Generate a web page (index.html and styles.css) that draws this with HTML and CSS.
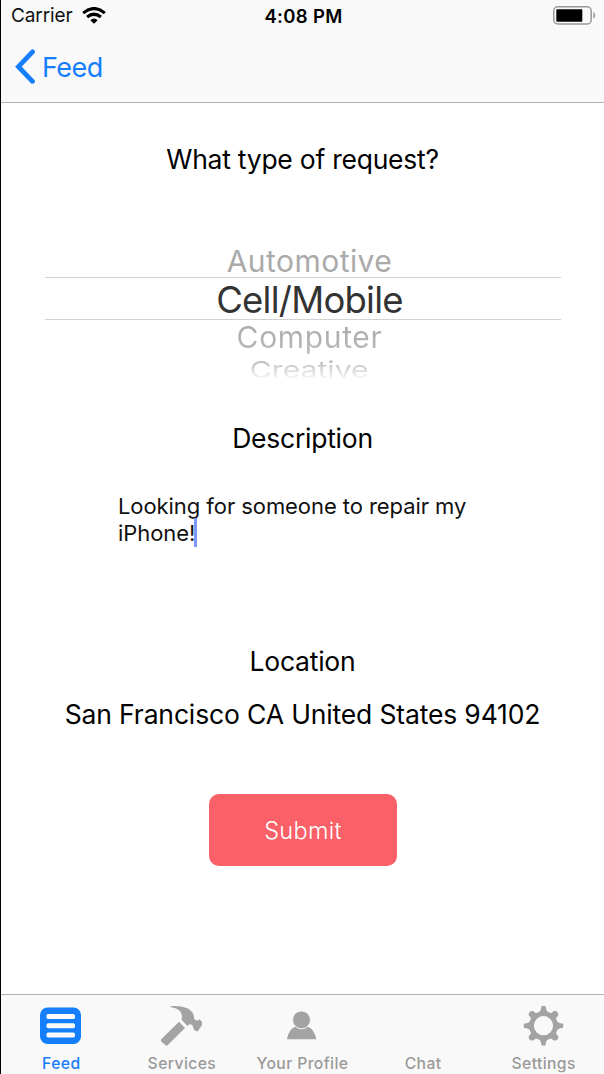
FILE: index.html
```html
<!DOCTYPE html>
<html lang="en">
<head>
<meta charset="utf-8">
<title>New request</title>
<link rel="stylesheet" href="styles.css">
</head>
<body>
<div class="screen">
  <header class="top">
    <div class="status">
      <div class="carrier"><span class="carrier-name">Carrier</span>
        <svg class="wifi" width="24" height="17" viewBox="0 0 24 17"><g fill="none" stroke="#000" stroke-width="3.200"><path d="M1.2 6.1Q12-3 22.8 6.1"/><path d="M5.1 10.1Q12 4.400 18.900 10.100"/></g><path d="M8.300 13.200Q12 9.800 15.700 13.200L12 16.700Z"/></svg>
      </div>
      <span class="time">4:08 PM</span>
      <svg class="battery" width="43" height="20" viewBox="0 0 43 20"><rect x=".8" y=".8" width="37.400" height="17.200" rx="4" fill="none" stroke="#999" stroke-width="1.500"/><rect x="3.300" y="3.200" width="26" height="12.500" rx=".8"/><path d="M40.800 6.500Q42.800 9.400 40.800 12.300Z" fill="#888" stroke="#888" stroke-width=".5"/></svg>
    </div>
    <nav class="back">
      <svg width="22" height="36" viewBox="0 0 22 36"><path d="M19.500 2.800L5.400 17.700L19.500 32.300" fill="none" stroke="#157efb" stroke-width="4.800" stroke-linecap="round" stroke-linejoin="miter"/></svg>
      <span class="back-label">Feed</span>
    </nav>
  </header>
  <main class="form">
    <h1 class="label question">What type of request?</h1>
    <div class="picker">
      <div class="option near auto"><span>Automotive</span></div>
      <div class="option selected"><span>Cell/Mobile</span></div>
      <div class="option near comp"><span>Computer</span></div>
      <div class="option far"><span>Creative</span></div>
    </div>
    <h2 class="label description">Description</h2>
    <p class="message">Looking for someone to repair my<br>iPhone!<i class="caret"></i></p>
    <h2 class="label location">Location</h2>
    <p class="label address">San Francisco CA United States 94102</p>
    <button class="submit">Submit</button>
  </main>
  <footer class="tabs">
    <div class="tab active">
      <svg class="icon" width="42" height="42" viewBox="0 0 42 42"><rect x="0" y="2.500" width="41" height="36.500" rx="7.500" fill="#157efb"/><g fill="#f9f9f9"><rect x="6.500" y="9" width="28.500" height="5" rx="1.700"/><rect x="6.500" y="18.200" width="28.500" height="5" rx="1.700"/><rect x="6.500" y="27.500" width="28.500" height="5" rx="1.700"/></g></svg>
      <span>Feed</span>
    </div>
    <div class="tab">
      <svg class="icon" width="42" height="42" viewBox="0 0 42 42"><g fill="#a3a3a3"><path d="M9.500 1.300Q19 .5 26.500 3.300Q33.500 7.500 33 13.300Q33.800 15.900 36.800 15.400L38.500 14.300L41 17V20.300L36.500 26.400L33.300 25.200L31.500 20.500Q29 18 26.300 20.900L20.400 14.600Q22 10.300 19.300 6.500Q15.800 3.100 9.500 2.100Z"/><path d="M18 16.800L24 23L5.800 41L0 36.600V34.500Z"/></g></svg>
      <span>Services</span>
    </div>
    <div class="tab">
      <svg class="icon" width="42" height="42" viewBox="0 0 42 42"><path d="M6 34.200Q7.500 24.800 13.500 22H27.500Q33.500 24.800 35.300 34.200Z" fill="#a3a3a3"/><circle cx="20.500" cy="14.900" r="9" fill="#a3a3a3" stroke="#f8f8f8" stroke-width="1"/></svg>
      <span>Your Profile</span>
    </div>
    <div class="tab">
      <div class="icon"></div>
      <span>Chat</span>
    </div>
    <div class="tab">
      <svg class="icon" width="42" height="42" viewBox="0 0 42 42"><defs><path id="tooth" d="M13.500 9.800Q18 7 18.500 1H22.500Q23 7 27.500 9.800Z"/><path id="diag" d="M13.500 10.200Q18 7 17.300 3Q20.500-.8 23.700 3Q23 7 27.500 10.200Z"/></defs><circle cx="20.500" cy="20.700" r="12" fill="none" stroke="#a3a3a3" stroke-width="4.800"/><g fill="#a3a3a3"><use href="#tooth"/><use href="#tooth" transform="rotate(90 20.500 20.700)"/><use href="#tooth" transform="rotate(180 20.500 20.700)"/><use href="#tooth" transform="rotate(270 20.500 20.700)"/><use href="#diag" transform="rotate(45 20.500 20.700)"/><use href="#diag" transform="rotate(135 20.500 20.700)"/><use href="#diag" transform="rotate(225 20.500 20.700)"/><use href="#diag" transform="rotate(315 20.500 20.700)"/></g></svg>
      <span>Settings</span>
    </div>
  </footer>
</div>
</body>
</html>
```
FILE: styles.css
```css
* { box-sizing: border-box; }
body { margin: 0; font-family: Inter, "Liberation Sans", sans-serif; color: #000; background: #fff; }
.screen { width: 604px; height: 1074px; display: flex; flex-direction: column; border-left: 1px solid #000; overflow: hidden; }
.top { height: 103px; background: #f9f9f9; border-bottom: 1px solid #b2b2b2; }
.status { height: 31px; display: grid; grid-template-columns: 1fr auto 1fr; align-items: center; padding: 0 8px 0 10px; font-size: 19px; line-height: 32px; }
.carrier { display: flex; align-items: center; gap: 9px; }
.carrier-name { color: #111; letter-spacing: -0.1px; }
.wifi { margin-top: -1px; }
.time { font-weight: 600; font-size: 18.500px; line-height: 30px; letter-spacing: 0.3px; }
.battery { justify-self: end; }
.back { display: flex; align-items: center; height: 72px; padding-left: 12px; color: #157efb; }
.back-label { font-size: 27px; line-height: 36px; margin: 1px 0 0 7px; letter-spacing: -0.5px; }
.form { flex: 1; display: flex; flex-direction: column; align-items: center; }
.label { margin: 0; font-size: 26.500px; font-weight: 400; line-height: 40px; letter-spacing: -0.25px; white-space: nowrap; }
.question { margin-top: 36px; }
.picker { width: 516px; height: 142px; margin: 66px 0 0; text-align: center; }
.option { white-space: nowrap; padding-left: 14px; }
.near { font-size: 30px; color: #aaa; }
.auto { line-height: 33px; height: 32px; letter-spacing: 0.45px; }
.selected { height: 43px; line-height: 45px; font-size: 36.500px; letter-spacing: -0.75px; color: #333; border-top: 1px solid #d2d2d2; border-bottom: 1px solid #d2d2d2; }
.comp { line-height: 35px; height: 35px; letter-spacing: 0.65px; background: linear-gradient(#a6a6a6, #bcbcbc); background-clip: text; color: transparent; }
.far { height: 28px; line-height: 30px; font-size: 26px; }
.far span { display: inline-block; transform: scale(1.16, .88); background: linear-gradient(#bcbcbc 15%, #f8f8f8 85%); background-clip: text; color: transparent; }
.description { margin-top: 31px; }
.message { width: 370px; height: 55px; margin: 35px 0 0 1px; font-size: 22px; line-height: 27px; letter-spacing: -0.07px; color: #111; }
.caret { display: inline-block; width: 3px; height: 29px; margin: -10px 0 -4px -1px; background: #7c96fa; vertical-align: -2px; }
.location { margin-top: 93px; }
.address { margin-top: 13px; letter-spacing: -0.15px; }
.submit { width: 188px; height: 72px; margin: 60px 0 0; padding: 0 0 0 1px; border: 0; border-radius: 10px; background: #fa6068; color: #fff; font: 300 23.500px/73px Inter, sans-serif; letter-spacing: 0.3px; }
.tabs { height: 80px; display: grid; grid-template-columns: repeat(5, 120.600px); background: #f9f9f9; border-top: 1px solid #b2b2b2; }
.tab { display: flex; flex-direction: column; align-items: center; padding-top: 10px; font-size: 15.700px; font-weight: 500; line-height: 20px; letter-spacing: 0.4px; color: #999; }
.tab span { margin-top: 7px; white-space: nowrap; }
.icon { width: 42px; height: 42px; flex: none; }
.active { color: #157efb; }
```
